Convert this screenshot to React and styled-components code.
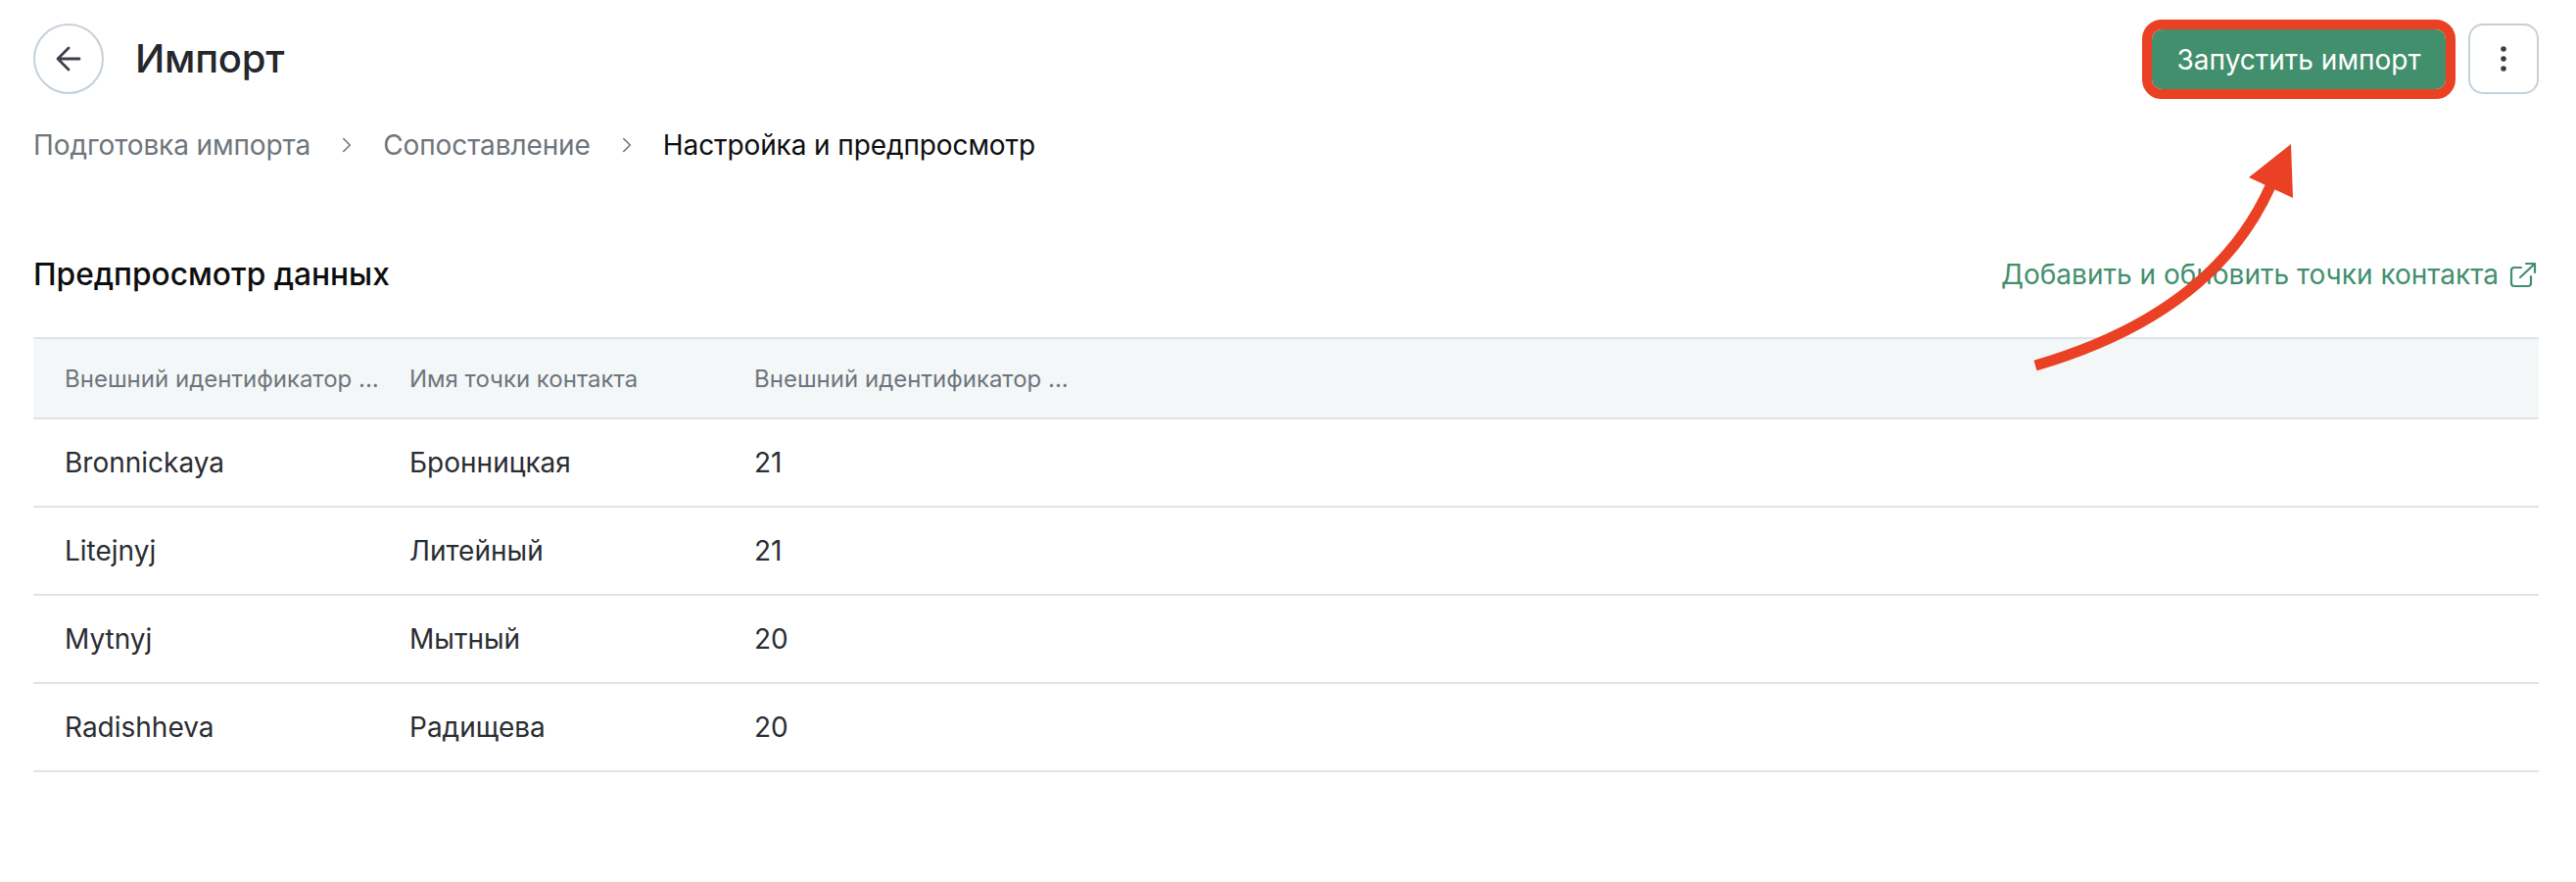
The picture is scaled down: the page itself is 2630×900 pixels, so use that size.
import React from "react";
import styled, { createGlobalStyle } from "styled-components";
import { ChevronRight } from "lucide-react";

const Global = createGlobalStyle`
  html, body { margin: 0; padding: 0; background: #fff; }
  body { font-family: Inter, "Noto Sans", sans-serif; color: #24272c; }
  * { box-sizing: border-box; }
`;

const Page = styled.div`
  position: relative;
  width: 2630px;
  height: 900px;
  padding: 24px 38px 0 34px;
  overflow: hidden;
`;

const Header = styled.header`
  display: flex;
  align-items: center;
  justify-content: space-between;
  height: 72px;
`;

const TitleGroup = styled.div`
  display: flex;
  align-items: center;
  gap: 32px;
`;

const BackButton = styled.button`
  display: flex;
  align-items: center;
  justify-content: center;
  width: 72px;
  height: 72px;
  padding: 0;
  border: 2px solid #c5d0d9;
  border-radius: 50%;
  background: #fff;
  color: #3c4148;
`;

const Title = styled.h1`
  margin: 0;
  font-size: 40px;
  line-height: 48px;
  font-weight: 500;
  letter-spacing: -0.2px;
  color: #24272c;
`;

const Actions = styled.div`
  display: flex;
  align-items: center;
  gap: 23px;
`;

const PrimaryButton = styled.button`
  width: 300px;
  height: 61px;
  margin-top: 1px;
  border: 0;
  border-radius: 10px;
  background: #428f6d;
  color: #fff;
  font-family: inherit;
  font-size: 28px;
  outline: 10px solid #ea4125;
  outline-offset: 0;
`;

const IconButton = styled.button`
  display: flex;
  align-items: center;
  justify-content: center;
  width: 72px;
  height: 72px;
  padding: 0;
  border: 2px solid #c5d0d9;
  border-radius: 15px;
  background: #fff;
  color: #3c4148;
`;

const Crumbs = styled.nav`
  display: flex;
  align-items: center;
  gap: 24px;
  margin-top: 32px;
  height: 40px;
  font-size: 28px;
  letter-spacing: -0.1px;
`;

const Crumb = styled.span`
  color: ${(p) => (p.$current ? "#0c0e10" : "#6e757c")};
`;

const CrumbSep = styled.span`
  display: flex;
  color: #6e757c;
`;

const SectionHead = styled.div`
  display: flex;
  align-items: center;
  justify-content: space-between;
  margin-top: 92px;
  height: 40px;
`;

const SectionTitle = styled.h2`
  margin: 0;
  font-size: 31.7px;
  line-height: 38px;
  font-weight: 500;
  color: #0c0e10;
`;

const AddLink = styled.a`
  display: flex;
  align-items: center;
  gap: 11px;
  font-size: 28px;
  color: #428f6d;
`;

const Table = styled.div`
  margin-top: 44px;
  border-top: 2px solid #dde3e8;
`;

const Row = styled.div`
  display: grid;
  grid-template-columns: repeat(3, 352px);
  align-items: center;
  height: 90px;
  padding-left: 32px;
  border-bottom: 2px solid #dde3e8;
`;

const HeadRow = styled(Row)`
  height: 82px;
  background: #f4f7f8;
`;

const HeadCell = styled.div`
  font-size: 24px;
  color: #6e757c;
  white-space: nowrap;
`;

const Cell = styled.div`
  font-size: 28px;
  color: #2a2d32;
`;

const Arrow = styled.svg`
  position: absolute;
  left: 0;
  top: 0;
  pointer-events: none;
`;

const BackIcon = () => (
  <svg width="32" height="32" viewBox="0 0 32 32" fill="none" stroke="currentColor" strokeWidth="2.8" strokeLinecap="round" strokeLinejoin="round">
    <path d="M27 16H5M16 5L5 16L16 27" />
  </svg>
);

const DotsIcon = () => (
  <svg width="32" height="32" viewBox="0 0 32 32" fill="currentColor">
    <circle cx="16" cy="6" r="2.8" />
    <circle cx="16" cy="16" r="2.8" />
    <circle cx="16" cy="26" r="2.8" />
  </svg>
);

const OpenIcon = () => (
  <svg width="30" height="30" viewBox="0 0 30 30" fill="none" stroke="currentColor" strokeWidth="2.2" strokeLinecap="round" strokeLinejoin="round">
    <path d="M12 8H5a3 3 0 0 0-3 3V24a3 3 0 0 0 3 3H19a3 3 0 0 0 3-3V17" />
    <path d="M11 18L26 4M17 4H26V13" />
  </svg>
);

const rows = [
  ["Bronnickaya", "Бронницкая", "21"],
  ["Litejnyj", "Литейный", "21"],
  ["Mytnyj", "Мытный", "20"],
  ["Radishheva", "Радищева", "20"],
];

export default function App() {
  return (
    <Page>
      <Global />
      <Header>
        <TitleGroup>
          <BackButton><BackIcon /></BackButton>
          <Title>Импорт</Title>
        </TitleGroup>
        <Actions>
          <PrimaryButton>Запустить импорт</PrimaryButton>
          <IconButton><DotsIcon /></IconButton>
        </Actions>
      </Header>
      <Crumbs>
        <Crumb>Подготовка импорта</Crumb>
        <CrumbSep><ChevronRight size={26} strokeWidth={1.5} /></CrumbSep>
        <Crumb>Сопоставление</Crumb>
        <CrumbSep><ChevronRight size={26} strokeWidth={1.5} /></CrumbSep>
        <Crumb $current>Настройка и предпросмотр</Crumb>
      </Crumbs>
      <SectionHead>
        <SectionTitle>Предпросмотр данных</SectionTitle>
        <AddLink>
          Добавить и обновить точки контакта
          <OpenIcon />
        </AddLink>
      </SectionHead>
      <Table>
        <HeadRow>
          <HeadCell>Внешний идентификатор ...</HeadCell>
          <HeadCell>Имя точки контакта</HeadCell>
          <HeadCell>Внешний идентификатор ...</HeadCell>
        </HeadRow>
        {rows.map((r) => (
          <Row key={r[0]}>
            {r.map((c, i) => <Cell key={i}>{c}</Cell>)}
          </Row>
        ))}
      </Table>
      <Arrow width="2630" height="900" viewBox="0 0 2630 900">
        <path d="M2078 373 Q2260 320 2318 190" fill="none" stroke="#ea4125" strokeWidth="11" />
        <polygon points="2339,147 2296,181 2341,202" fill="#ea4125" />
      </Arrow>
    </Page>
  );
}
